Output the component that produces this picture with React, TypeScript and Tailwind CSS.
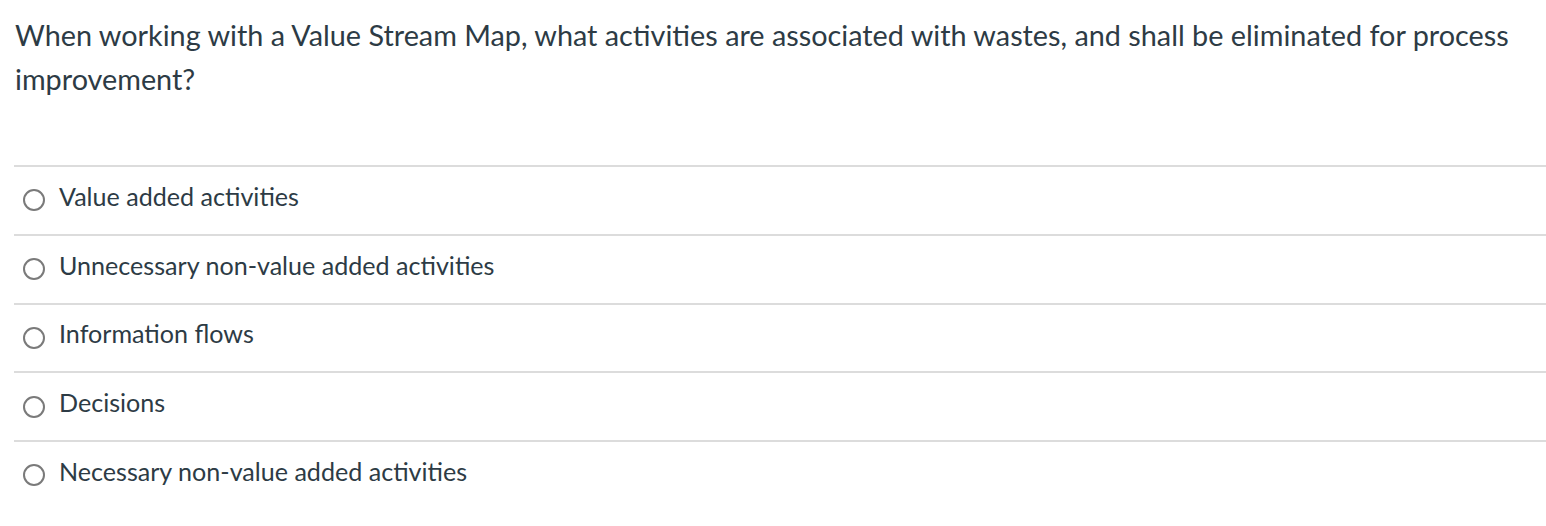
import React from "react";

const options = [
  "Value added activities",
  "Unnecessary non-value added activities",
  "Information flows",
  "Decisions",
  "Necessary non-value added activities",
];

export default function App() {
  return (
    <div
      className="w-[1546px] h-[526px] bg-white text-[#2d3b45] overflow-hidden"
      style={{ fontFamily: "Lato, 'Noto Sans', sans-serif" }}
    >
      <div className="pl-[15px] pt-[13px] pr-[20px] text-[28.8px] leading-[44px]">
        When working with a Value Stream Map, what activities are associated with wastes, and shall be eliminated for process improvement?
      </div>
      <div className="ml-[14px] mt-[64px]">
        {options.map((o) => (
          <div
            key={o}
            className="flex items-center h-[68.75px] border-t-2 border-[#dcdcdc] pl-[9px]"
          >
            <span className="w-[22px] h-[22px] rounded-full border-2 border-[#7a7a7a] bg-white shrink-0" />
            <span className="ml-[14px] mb-[9px] text-[25.1px] leading-[30px]">{o}</span>
          </div>
        ))}
      </div>
    </div>
  );
}
